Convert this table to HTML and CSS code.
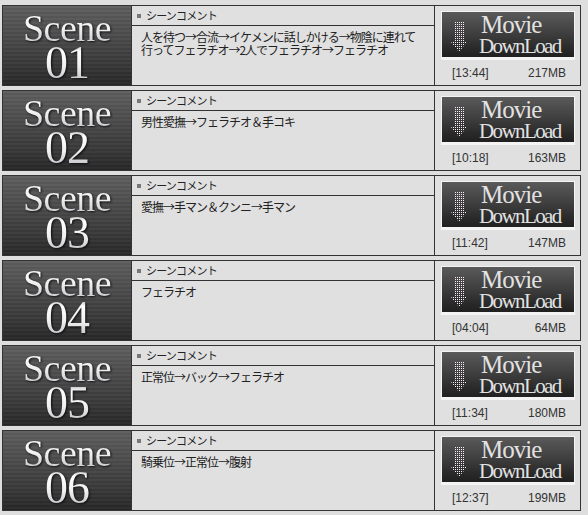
FILE: index.html
```html
<!DOCTYPE html>
<html lang="ja">
    <head>
        <meta charset="utf-8"/>
        <title>Scene list</title>
        <link rel="stylesheet" href="styles.css">
    </head>
    <body>
        <div class="scene-list">
            <div class="scene">
                <div class="thumb"><span class="title">Scene<br><span class="num">01</span></span></div>
                <div class="comment">
                    <div class="comment-head"><i class="bullet"></i>シーンコメント</div>
                    <div class="comment-body">人を待つ→合流→イケメンに話しかける→物陰に連れて行ってフェラチオ→2人でフェラチオ→フェラチオ</div>
                </div>
                <div class="dl">
                    <a class="dl-btn" href="#">
                        <svg class="arrow" width="16" height="30" viewBox="0 0 16 30"><defs><pattern id="dots" width="2" height="2" patternUnits="userSpaceOnUse"><rect width="1" height="1" fill="#f8ecf6"/></pattern></defs><polygon points="3,0 13,0 13,20 16,20 8,30 0,20 3,20" fill="url(#dots)"/></svg>
                        <span class="dl-text"><span class="movie">Movie</span><span class="download">DownLoad</span></span>
                    </a>
                    <div class="dl-info"><span>[13:44]</span><span>217MB</span></div>
                </div>
            </div>
            <div class="scene">
                <div class="thumb"><span class="title">Scene<br><span class="num">02</span></span></div>
                <div class="comment">
                    <div class="comment-head"><i class="bullet"></i>シーンコメント</div>
                    <div class="comment-body">男性愛撫→フェラチオ＆手コキ</div>
                </div>
                <div class="dl">
                    <a class="dl-btn" href="#">
                        <svg class="arrow" width="16" height="30" viewBox="0 0 16 30"><defs><pattern id="dots" width="2" height="2" patternUnits="userSpaceOnUse"><rect width="1" height="1" fill="#f8ecf6"/></pattern></defs><polygon points="3,0 13,0 13,20 16,20 8,30 0,20 3,20" fill="url(#dots)"/></svg>
                        <span class="dl-text"><span class="movie">Movie</span><span class="download">DownLoad</span></span>
                    </a>
                    <div class="dl-info"><span>[10:18]</span><span>163MB</span></div>
                </div>
            </div>
            <div class="scene">
                <div class="thumb"><span class="title">Scene<br><span class="num">03</span></span></div>
                <div class="comment">
                    <div class="comment-head"><i class="bullet"></i>シーンコメント</div>
                    <div class="comment-body">愛撫→手マン＆クンニ→手マン</div>
                </div>
                <div class="dl">
                    <a class="dl-btn" href="#">
                        <svg class="arrow" width="16" height="30" viewBox="0 0 16 30"><defs><pattern id="dots" width="2" height="2" patternUnits="userSpaceOnUse"><rect width="1" height="1" fill="#f8ecf6"/></pattern></defs><polygon points="3,0 13,0 13,20 16,20 8,30 0,20 3,20" fill="url(#dots)"/></svg>
                        <span class="dl-text"><span class="movie">Movie</span><span class="download">DownLoad</span></span>
                    </a>
                    <div class="dl-info"><span>[11:42]</span><span>147MB</span></div>
                </div>
            </div>
            <div class="scene">
                <div class="thumb"><span class="title">Scene<br><span class="num">04</span></span></div>
                <div class="comment">
                    <div class="comment-head"><i class="bullet"></i>シーンコメント</div>
                    <div class="comment-body">フェラチオ</div>
                </div>
                <div class="dl">
                    <a class="dl-btn" href="#">
                        <svg class="arrow" width="16" height="30" viewBox="0 0 16 30"><defs><pattern id="dots" width="2" height="2" patternUnits="userSpaceOnUse"><rect width="1" height="1" fill="#f8ecf6"/></pattern></defs><polygon points="3,0 13,0 13,20 16,20 8,30 0,20 3,20" fill="url(#dots)"/></svg>
                        <span class="dl-text"><span class="movie">Movie</span><span class="download">DownLoad</span></span>
                    </a>
                    <div class="dl-info"><span>[04:04]</span><span>64MB</span></div>
                </div>
            </div>
            <div class="scene">
                <div class="thumb"><span class="title">Scene<br><span class="num">05</span></span></div>
                <div class="comment">
                    <div class="comment-head"><i class="bullet"></i>シーンコメント</div>
                    <div class="comment-body">正常位→バック→フェラチオ</div>
                </div>
                <div class="dl">
                    <a class="dl-btn" href="#">
                        <svg class="arrow" width="16" height="30" viewBox="0 0 16 30"><defs><pattern id="dots" width="2" height="2" patternUnits="userSpaceOnUse"><rect width="1" height="1" fill="#f8ecf6"/></pattern></defs><polygon points="3,0 13,0 13,20 16,20 8,30 0,20 3,20" fill="url(#dots)"/></svg>
                        <span class="dl-text"><span class="movie">Movie</span><span class="download">DownLoad</span></span>
                    </a>
                    <div class="dl-info"><span>[11:34]</span><span>180MB</span></div>
                </div>
            </div>
            <div class="scene">
                <div class="thumb"><span class="title">Scene<br><span class="num">06</span></span></div>
                <div class="comment">
                    <div class="comment-head"><i class="bullet"></i>シーンコメント</div>
                    <div class="comment-body">騎乗位→正常位→腹射</div>
                </div>
                <div class="dl">
                    <a class="dl-btn" href="#">
                        <svg class="arrow" width="16" height="30" viewBox="0 0 16 30"><defs><pattern id="dots" width="2" height="2" patternUnits="userSpaceOnUse"><rect width="1" height="1" fill="#f8ecf6"/></pattern></defs><polygon points="3,0 13,0 13,20 16,20 8,30 0,20 3,20" fill="url(#dots)"/></svg>
                        <span class="dl-text"><span class="movie">Movie</span><span class="download">DownLoad</span></span>
                    </a>
                    <div class="dl-info"><span>[12:37]</span><span>199MB</span></div>
                </div>
            </div>
        </div>
    </body>
</html>
```

FILE: styles.css
```css
html, body {
    margin: 0;
    padding: 0;
    background: #dedede;
    font-family: "Noto Sans CJK JP", "Noto Sans", sans-serif;
    color: #222;
}

.scene-list {
    padding: 5px 0 0 2px;
    display: flex;
    flex-direction: column;
    gap: 4px;
}

.scene {
    width: 577px;
    height: 79px;
    display: flex;
    border: 1px solid #333;
    background: #e0e0e0;
}

/* scene title picture */
.thumb {
    width: 128px;
    border-right: 1px solid #333;
    display: flex;
    justify-content: center;
    background:
        repeating-linear-gradient(180deg, rgba(255,255,255,0.03) 0px, rgba(255,255,255,0.03) 2px, rgba(0,0,0,0.03) 2px, rgba(0,0,0,0.03) 4px),
        linear-gradient(180deg, #5e5e5e 0%, #4a4a4a 40%, #383838 75%, #262626 100%);
    font-family: "Liberation Serif", "DejaVu Serif", serif;
}

.thumb .title {
    display: block;
    text-align: center;
    font-size: 38px;
    line-height: 36px;
    margin-top: 4px;
    letter-spacing: -0.5px;
    background: linear-gradient(180deg, #ffffff 0%, #f0f0f0 25%, #c0c0c8 48%, #ffffff 55%, #f0f0f0 75%, #b8b8c0 100%);
    -webkit-background-clip: text;
    background-clip: text;
    color: transparent;
    filter: drop-shadow(1px 1px 1px rgba(0,0,0,0.8));
}

.thumb .num {
    font-size: 46px;
    line-height: 34px;
    letter-spacing: -1px;
}

/* comment */
.comment {
    width: 302px;
    border-right: 1px solid #333;
    display: flex;
    flex-direction: column;
}

.comment-head {
    height: 19px;
    border-bottom: 1px solid #333;
    font-size: 11px;
    line-height: 19px;
    padding-left: 5px;
    letter-spacing: -0.8px;
    display: flex;
    align-items: center;
}

.comment-head .bullet {
    width: 4px;
    height: 4px;
    background: #777;
    margin-right: 5px;
}

.comment-body {
    font-size: 12px;
    line-height: 13px;
    letter-spacing: -1px;
    padding: 4px 14px 0 9px;
}

/* download */
.dl {
    width: 145px;
    padding: 5px 0 0 6px;
    box-sizing: border-box;
}

.dl-btn {
    width: 132px;
    height: 45px;
    display: flex;
    align-items: center;
    border: 1px solid #f4f4f4;
    border-bottom-width: 3px;
    background: linear-gradient(180deg, #5a5a5a 0%, #404040 45%, #2a2a2a 80%, #202020 100%);
    text-decoration: none;
}

.arrow {
    margin: 4px 0 0 9px;
}

.dl-text {
    display: flex;
    flex-direction: column;
    align-items: flex-start;
    margin-left: 12px;
    font-family: "Liberation Serif", "DejaVu Serif", serif;
    color: #e2e2e2;
}

.movie {
    font-size: 25px;
    line-height: 22px;
    letter-spacing: -1px;
    margin-left: 2px;
}

.download {
    font-size: 21px;
    line-height: 20px;
    letter-spacing: -1.6px;
}

.dl-info {
    display: flex;
    justify-content: space-between;
    width: 114px;
    padding: 6px 0 0 11px;
    font-family: "Liberation Sans", sans-serif;
    font-size: 12px;
    line-height: 14px;
    color: #333;
}
```
